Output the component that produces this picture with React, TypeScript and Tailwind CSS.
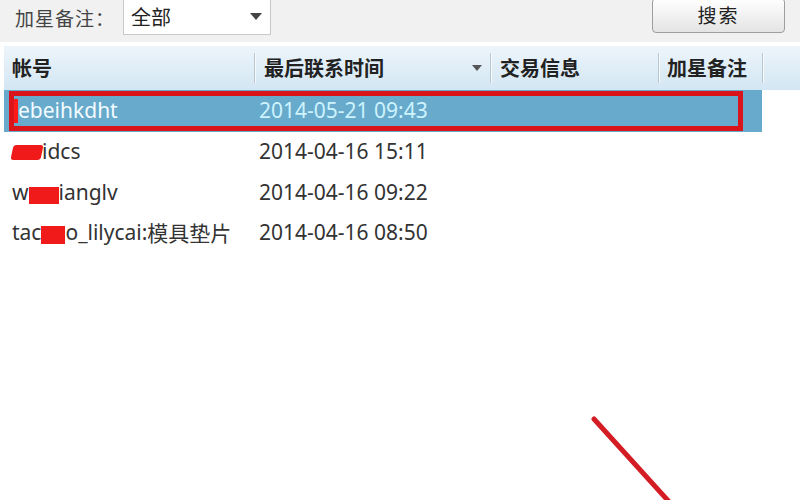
import React from "react";

const cjk = { fontFamily: '"Noto Sans CJK SC", "Noto Sans", sans-serif' };
const latin = { fontFamily: '"Noto Sans", "Noto Sans CJK SC", sans-serif' };

function Sep() {
  return <div className="w-[2px] h-[30px] border-l border-[#b9c6d0] bg-white/70" />;
}

export default function App() {
  return (
    <div className="relative w-[800px] h-[500px] bg-white overflow-hidden">
      {/* toolbar */}
      <div className="h-[42px] bg-[#f1f1f1] flex items-start">
        <div className="pl-[15px] pt-[4px] text-[19px] leading-[28px] text-[#444] tracking-[1px]" style={cjk}>
          加星备注：
        </div>
        <div className="ml-[8px] mt-[-2px] w-[148px] h-[37px] bg-white border border-[#c9c9c9] flex items-center justify-between pl-[7px] pr-[8px]">
          <span className="text-[20px] text-[#222]" style={cjk}>全部</span>
          <svg width="12" height="8" viewBox="0 0 12 8"><path d="M0 0 L12 0 L6 7 Z" fill="#444" /></svg>
        </div>
        <div className="flex-1" />
        <div className="mr-[15px] mt-[-2px] w-[133px] h-[35px] rounded-[4px] border border-[#9e9e9e] bg-gradient-to-b from-[#ffffff] to-[#e4e4e4] flex items-center justify-center">
          <span className="text-[19px] text-[#222] tracking-[2px]" style={cjk}>搜索</span>
        </div>
      </div>
      <div className="h-[4px] bg-white" />
      {/* header */}
      <div className="ml-[4px] h-[44px] bg-gradient-to-b from-[#edf5fb] to-[#d3e6f3] flex items-center text-[20px] text-[#222] font-bold" style={cjk}>
        <div className="w-[250px] pl-[8px]">帐号</div>
        <Sep />
        <div className="w-[234px] pl-[8px] flex items-center justify-between pr-[8px]">
          <span>最后联系时间</span>
          <svg width="10" height="6" viewBox="0 0 10 6"><path d="M0 0 L10 0 L5 6 Z" fill="#555" /></svg>
        </div>
        <Sep />
        <div className="w-[166px] pl-[8px]">交易信息</div>
        <Sep />
        <div className="w-[102px] pl-[7px]">加星备注</div>
        <Sep />
      </div>
      {/* rows */}
      <div className="ml-[4px] w-[758px] text-[21px]" style={latin}>
        <div className="h-[42px] bg-[#68aacb] flex items-center relative">
          <div className="absolute left-[5px] top-[1px] w-[734px] h-[40px] border-[5px] border-[#d9141b]" />
          <div className="w-[255px] pl-[8px] flex items-center text-[#f2fbff]">
            <span className="inline-block w-[6px] h-[24px] bg-[#ff1a1a]" />
            <span>ebeihkdht</span>
          </div>
          <div className="text-[#cdf3ff]">2014-05-21 09:43</div>
        </div>
        <div className="h-[40px] flex items-center text-[#333]">
          <div className="w-[255px] pl-[8px] flex items-center">
            <span className="inline-block w-[30px] h-[15px] bg-[#f01a1a] rounded-[3px] -skew-x-12" />
            <span>idcs</span>
          </div>
          <div>2014-04-16 15:11</div>
        </div>
        <div className="h-[41px] flex items-center text-[#333]">
          <div className="w-[255px] pl-[8px] flex items-center">
            <span>w</span>
            <span className="inline-block w-[30px] h-[17px] bg-[#f01a1a] mt-[6px]" />
            <span>ianglv</span>
          </div>
          <div>2014-04-16 09:22</div>
        </div>
        <div className="h-[40px] flex items-center text-[#333]">
          <div className="w-[255px] pl-[8px] flex items-center">
            <span>tac</span>
            <span className="inline-block w-[24px] h-[18px] bg-[#f01a1a] mt-[4px]" />
            <span>o_lilycai:</span>
            <span style={cjk}>模具垫片</span>
          </div>
          <div>2014-04-16 08:50</div>
        </div>
      </div>
      {/* red arrow line */}
      <svg className="absolute left-0 top-0" width="800" height="500">
        <line x1="594" y1="419" x2="672" y2="505" stroke="#d41c24" strokeWidth="5" strokeLinecap="round" />
      </svg>
    </div>
  );
}
